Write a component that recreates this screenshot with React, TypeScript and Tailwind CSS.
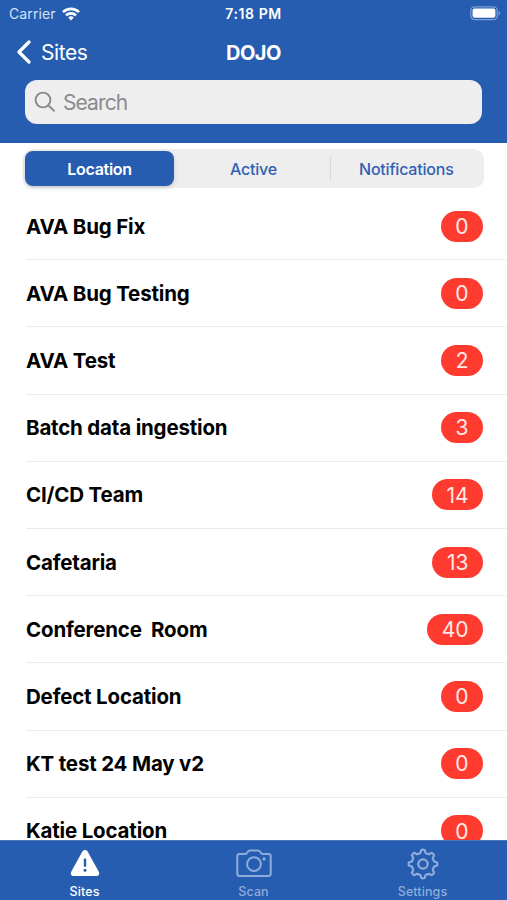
import { useState } from "react";

interface Site {
  name: string;
  count: number;
}

const sites: Site[] = [
  { name: "AVA Bug Fix", count: 0 },
  { name: "AVA Bug Testing", count: 0 },
  { name: "AVA Test", count: 2 },
  { name: "Batch data ingestion", count: 3 },
  { name: "CI/CD Team", count: 14 },
  { name: "Cafetaria", count: 13 },
  { name: "Conference  Room", count: 40 },
  { name: "Defect Location", count: 0 },
  { name: "KT test 24 May v2", count: 0 },
  { name: "Katie Location", count: 0 },
];

const segments = ["Location", "Active", "Notifications"];

function StatusBar() {
  return (
    <div className="grid h-[27px] grid-cols-3 items-center pl-[9px] pr-[6px] text-[14px]">
      <div className="flex items-center gap-[6px] tracking-[0.1px] text-[#d5e2f7]">
        <span>Carrier</span>
        <svg width="18" height="14" viewBox="0 0 18 14" fill="none" stroke="white" strokeWidth="2.6">
          <path d="M1 5.2a11.3 11.3 0 0 1 16 0" />
          <path d="M4 8.4a7.1 7.1 0 0 1 10 0" />
          <path d="M9 13.4 6.2 10.5a4 4 0 0 1 5.6 0Z" fill="white" stroke="none" />
        </svg>
      </div>
      <span className="-ml-[3px] text-center font-semibold tracking-[0.6px]">7:18 PM</span>
      <svg className="justify-self-end" width="31" height="15" viewBox="0 0 31 15" fill="none">
        <rect x="0.8" y="0.8" width="26.4" height="12.8" rx="3.8" stroke="#7f9fd2" strokeWidth="1.2" />
        <rect x="2.6" y="2.6" width="22.8" height="9.2" rx="2" fill="white" />
        <path d="M28.6 5v4.5c1.9-.7 1.9-3.8 0-4.5Z" fill="#7f9fd2" />
      </svg>
    </div>
  );
}

function Header() {
  return (
    <header className="h-[142.5px] shrink-0 bg-[#265db1] text-white">
      <StatusBar />
      <div className="grid h-[53px] grid-cols-3 items-center pb-[3px] pl-4 pr-4">
        <button className="flex items-center gap-[10px] text-[21px] tracking-[-0.4px]">
          <svg width="15" height="24" viewBox="0 0 15 24" fill="none" stroke="white" strokeWidth="3.2" strokeLinecap="round" strokeLinejoin="round">
            <path d="M13 2 3 12l10 10" />
          </svg>
          <span className="pt-[2px]">Sites</span>
        </button>
        <h1 className="pt-px text-center text-[20px] font-bold tracking-[-0.5px]">DOJO</h1>
      </div>
      <div className="mx-[25px] flex h-11 items-center gap-[7px] rounded-xl bg-[#eee] pl-[9px] text-[21px] tracking-[-0.9px] text-[#8a8a8e]">
        <svg width="22" height="22" viewBox="0 0 22 22" fill="none" stroke="currentColor" strokeWidth="1.9" strokeLinecap="round">
          <circle cx="9" cy="9" r="7.4" />
          <path d="m14.5 14.5 5.5 5.3" />
        </svg>
        <span className="pt-[2px]">Search</span>
      </div>
    </header>
  );
}

function SegmentedControl() {
  const [selected, setSelected] = useState("Location");

  return (
    <div className="mx-[23px] mt-[6.5px] flex h-[39px] shrink-0 items-center rounded-[10px] bg-[#eee] p-[2px] text-[16px] tracking-[-0.2px]">
      {segments.map((segment, i) => (
        <div key={segment} className="flex h-full flex-1 items-center">
          {i === 2 && <span className="h-[23px] w-px bg-[#d8d8da]" />}
          <button
            onClick={() => setSelected(segment)}
            className={
              segment === selected
                ? "h-[35px] w-[149px] rounded-[8px] bg-[#265db1] font-semibold tracking-[-0.3px] text-white shadow-[0_2px_5px_rgba(0,0,0,0.15)]"
                : "h-full flex-1 font-medium text-[#3261b2]"
            }
          >
            {segment}
          </button>
        </div>
      ))}
    </div>
  );
}

function SiteRow({ site }: { site: Site }) {
  return (
    <li className="ml-[26px] flex h-[67.2px] shrink-0 items-center justify-between border-b border-[#ebebed] pr-6">
      <span className="whitespace-pre pt-[2px] text-[20.5px] font-bold tracking-[-0.18px] text-black">{site.name}</span>
      <span className="flex h-[31px] items-center rounded-full bg-[#ff3b30] px-[14.5px] pt-px text-[21px] text-[#ffe9e7]">
        {site.count}
      </span>
    </li>
  );
}

function TabBar() {
  return (
    <nav className="grid h-[60px] shrink-0 grid-cols-3 border-t border-[#4a76ba] bg-[#265db1] text-[12.5px] font-medium tracking-[0.1px] text-[#8eacdb]">
      <button className="flex flex-col items-center pt-2 text-white">
        <svg width="32" height="29" viewBox="0 0 32 29">
          <path d="M13.4 2.5c1.2-2 4-2 5.2 0l11.2 20.2c1.2 2.2-.2 4.3-2.6 4.3H4.8c-2.4 0-3.8-2.1-2.6-4.3Z" fill="white" />
          <path d="M16 9.5v8.2" stroke="#265db1" strokeWidth="2.4" />
          <circle cx="16" cy="21.2" r="1.5" fill="#265db1" />
        </svg>
        <span className="mt-[5px]">Sites</span>
      </button>
      <button className="flex flex-col items-center pt-2">
        <svg width="36" height="29" viewBox="0 0 36 29" fill="none" stroke="currentColor" strokeWidth="2">
          <path d="M3.500 5h5.700c1 0 1.500-.5 2-1.300l.8-1.200c.5-.8 1-1.100 2-1.100h8c1 0 1.500.3 2 1.100l.8 1.200c.5.800 1 1.300 2 1.300h5.700c1.300 0 2.200.9 2.200 2.200v17.600c0 1.300-.9 2.200-2.200 2.200h-29c-1.300 0-2.200-.9-2.200-2.200V7.200C1.300 5.900 2.200 5 3.500 5Z" />
          <circle cx="18" cy="15.200" r="6.900" />
          <circle cx="28" cy="9.900" r="1.600" fill="currentColor" stroke="none" />
        </svg>
        <span className="mt-[5px]">Scan</span>
      </button>
      <button className="flex flex-col items-center pt-[7px]">
        <svg width="32" height="32" viewBox="0 0 32 32" fill="none" stroke="currentColor" strokeWidth="2.2" strokeLinejoin="round">
          <path d="M13.5 4.8 14.2 2.2Q16 1 17.8 2.2L18.5 4.8Q20 5.9 22.1 6.2L24.5 4.9Q26.6 5.3 27.1 7.5L25.8 9.9Q26.1 12 27.2 13.5L29.8 14.2Q31 16 29.8 17.8L27.2 18.5Q26.1 20 25.8 22.1L27.1 24.5Q26.6 26.7 24.5 27.1L22.1 25.8Q20 26.1 18.5 27.2L17.8 29.8Q16 31 14.2 29.8L13.5 27.2Q12 26.1 9.9 25.8L7.5 27.1Q5.4 26.7 4.9 24.5L6.2 22.1Q5.9 20 4.8 18.5L2.2 17.8Q1 16 2.2 14.2L4.8 13.5Q5.9 12 6.2 9.9L4.9 7.5Q5.4 5.3 7.5 4.9L9.9 6.2Q12 5.9 13.5 4.8Z" />
          <circle cx="16" cy="16" r="4.7" />
        </svg>
        <span className="mt-[3px]">Settings</span>
      </button>
    </nav>
  );
}

export default function App() {
  return (
    <div className="flex h-screen w-full flex-col overflow-hidden bg-white font-['Inter',sans-serif]">
      <Header />
      <SegmentedControl />
      <ul className="mt-[5px] flex min-h-0 flex-1 flex-col overflow-hidden">
        {sites.map((site) => (
          <SiteRow key={site.name} site={site} />
        ))}
      </ul>
      <TabBar />
    </div>
  );
}
